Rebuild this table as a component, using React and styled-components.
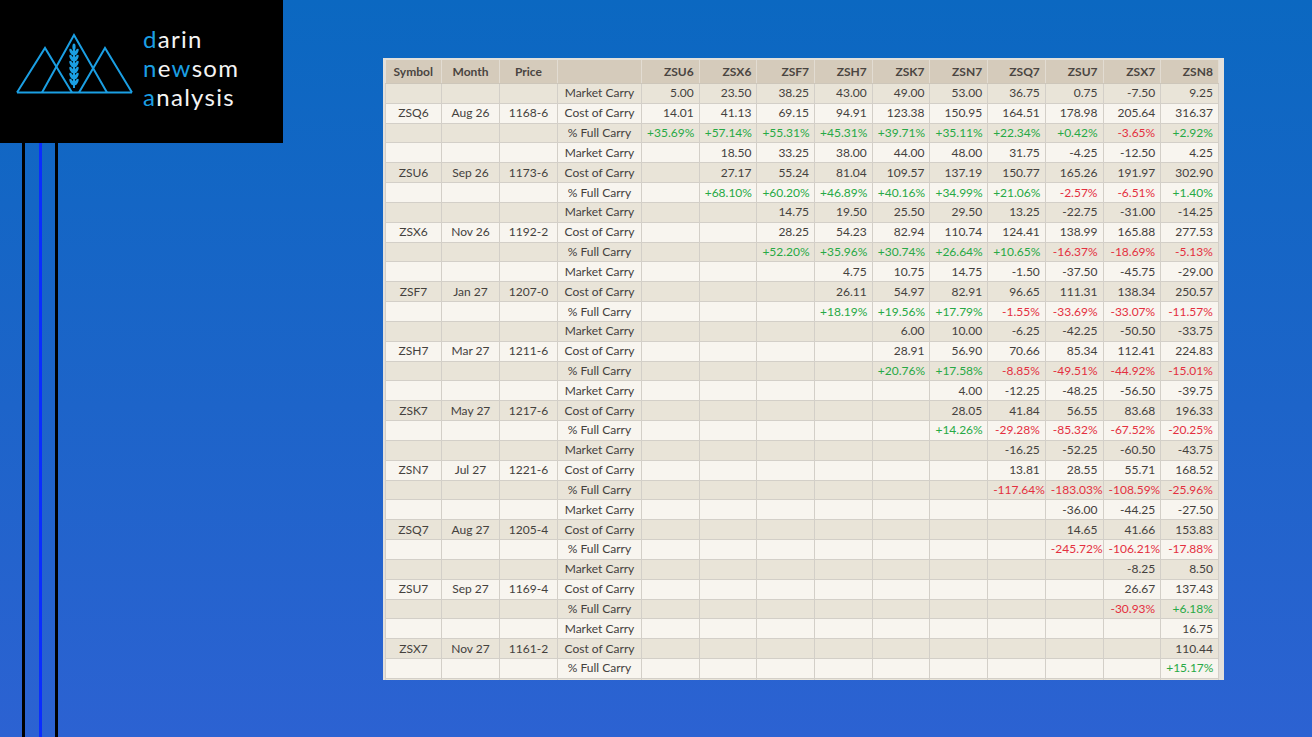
import React from 'react';
import styled, { createGlobalStyle } from 'styled-components';

const GlobalStyle = createGlobalStyle`
  html, body {
    margin: 0;
    padding: 0;
  }
  body {
    font-family: Lato, "Open Sans", Arial, sans-serif;
    background: linear-gradient(180deg, #0b68c1 0%, #1d64c9 55%, #2c62d2 100%);
    min-height: 100vh;
    overflow: hidden;
  }
`;

const Page = styled.div`
  display: grid;
  grid-template-columns: 283px 1fr;
  height: 737px;
`;

const Side = styled.div`
  display: flex;
  flex-direction: column;
  height: 100%;
`;

const LogoBox = styled.div`
  background: #000;
  height: 143px;
  display: flex;
  align-items: flex-start;
`;

const LogoText = styled.div`
  padding-top: 24px;
  margin-left: 2px;
  font-family: Lato, "Open Sans", sans-serif;
  font-weight: 400;
  font-size: 24px;
  line-height: 29px;
  color: #f4f4f4;
  letter-spacing: 1.3px;
`;

const Accent = styled.span`
  color: #1b9fe3;
`;

const Bars = styled.div`
  flex: 1;
  display: flex;
  padding-left: 22px;
`;

const Bar = styled.div`
  width: 3px;
  margin-right: ${p => p.gap}px;
  background: ${p => p.color};
`;

const Main = styled.div`
  padding: 58px 0 0 100px;
`;

const TableFrame = styled.div`
  width: 835px;
  height: 620px;
  overflow: hidden;
  background: #e3e0db;
  padding: 2px 4px 0 2px;
`;

const Grid = styled.table`
  width: 833px;
  table-layout: fixed;
  border-collapse: collapse;
  font-size: 12px;
  color: #44413d;
`;

const HeadCell = styled.th`
  height: 23px;
  padding: 0 5px;
  background: #d5cbbb;
  font-weight: 700;
  color: #4a4541;
  text-align: ${p => (p.right ? 'right' : 'center')};
  border-right: 1px solid #e2dcd2;
  border-bottom: 1px solid #cdc6ba;
  white-space: nowrap;
`;

const Row = styled.tr`
  height: 19.83px;
  background: ${p => (p.dark ? '#e9e4d8' : '#f8f5ef')};
`;

const Cell = styled.td`
  padding: 0 5px;
  border: 1px solid #d3cfc8;
  border-top: none;
  text-align: ${p => (p.right ? 'right' : 'center')};
  color: ${p => (p.tone === 'up' ? '#27a945' : p.tone === 'down' ? '#e4303f' : '#44413d')};
  white-space: nowrap;
  line-height: 18px;
`;

const contracts = ['ZSU6', 'ZSX6', 'ZSF7', 'ZSH7', 'ZSK7', 'ZSN7', 'ZSQ7', 'ZSU7', 'ZSX7', 'ZSN8'];

const blocks = [
  {
    sym: 'ZSQ6', month: 'Aug 26', price: '1168-6',
    mc: ['5.00', '23.50', '38.25', '43.00', '49.00', '53.00', '36.75', '0.75', '-7.50', '9.25'],
    cc: ['14.01', '41.13', '69.15', '94.91', '123.38', '150.95', '164.51', '178.98', '205.64', '316.37'],
    fc: ['+35.69%', '+57.14%', '+55.31%', '+45.31%', '+39.71%', '+35.11%', '+22.34%', '+0.42%', '-3.65%', '+2.92%'],
  },
  {
    sym: 'ZSU6', month: 'Sep 26', price: '1173-6',
    mc: ['18.50', '33.25', '38.00', '44.00', '48.00', '31.75', '-4.25', '-12.50', '4.25'],
    cc: ['27.17', '55.24', '81.04', '109.57', '137.19', '150.77', '165.26', '191.97', '302.90'],
    fc: ['+68.10%', '+60.20%', '+46.89%', '+40.16%', '+34.99%', '+21.06%', '-2.57%', '-6.51%', '+1.40%'],
  },
  {
    sym: 'ZSX6', month: 'Nov 26', price: '1192-2',
    mc: ['14.75', '19.50', '25.50', '29.50', '13.25', '-22.75', '-31.00', '-14.25'],
    cc: ['28.25', '54.23', '82.94', '110.74', '124.41', '138.99', '165.88', '277.53'],
    fc: ['+52.20%', '+35.96%', '+30.74%', '+26.64%', '+10.65%', '-16.37%', '-18.69%', '-5.13%'],
  },
  {
    sym: 'ZSF7', month: 'Jan 27', price: '1207-0',
    mc: ['4.75', '10.75', '14.75', '-1.50', '-37.50', '-45.75', '-29.00'],
    cc: ['26.11', '54.97', '82.91', '96.65', '111.31', '138.34', '250.57'],
    fc: ['+18.19%', '+19.56%', '+17.79%', '-1.55%', '-33.69%', '-33.07%', '-11.57%'],
  },
  {
    sym: 'ZSH7', month: 'Mar 27', price: '1211-6',
    mc: ['6.00', '10.00', '-6.25', '-42.25', '-50.50', '-33.75'],
    cc: ['28.91', '56.90', '70.66', '85.34', '112.41', '224.83'],
    fc: ['+20.76%', '+17.58%', '-8.85%', '-49.51%', '-44.92%', '-15.01%'],
  },
  {
    sym: 'ZSK7', month: 'May 27', price: '1217-6',
    mc: ['4.00', '-12.25', '-48.25', '-56.50', '-39.75'],
    cc: ['28.05', '41.84', '56.55', '83.68', '196.33'],
    fc: ['+14.26%', '-29.28%', '-85.32%', '-67.52%', '-20.25%'],
  },
  {
    sym: 'ZSN7', month: 'Jul 27', price: '1221-6',
    mc: ['-16.25', '-52.25', '-60.50', '-43.75'],
    cc: ['13.81', '28.55', '55.71', '168.52'],
    fc: ['-117.64%', '-183.03%', '-108.59%', '-25.96%'],
  },
  {
    sym: 'ZSQ7', month: 'Aug 27', price: '1205-4',
    mc: ['-36.00', '-44.25', '-27.50'],
    cc: ['14.65', '41.66', '153.83'],
    fc: ['-245.72%', '-106.21%', '-17.88%'],
  },
  {
    sym: 'ZSU7', month: 'Sep 27', price: '1169-4',
    mc: ['-8.25', '8.50'],
    cc: ['26.67', '137.43'],
    fc: ['-30.93%', '+6.18%'],
  },
  {
    sym: 'ZSX7', month: 'Nov 27', price: '1161-2',
    mc: ['16.75'],
    cc: ['110.44'],
    fc: ['+15.17%'],
  },
];

// pad each series on the left so values sit under the right contract
const padded = (vals) => [...Array(contracts.length - vals.length).fill(''), ...vals];

const toneOf = (v, pct) => {
  if (!pct || !v) return undefined;
  return v.startsWith('-') ? 'down' : 'up';
};

const Logo = () => (
  <svg width="141" height="143" viewBox="0 0 141 143">
    <g fill="none" stroke="#1b9fe3" strokeWidth="2" strokeLinejoin="miter">
      <polyline points="17,92.5 45,48 72,92.5" />
      <polyline points="42,92.5 74,35 107,92.5" />
      <polyline points="79,92.5 105,48 132,92.5" />
      <line x1="17" y1="92.5" x2="132" y2="92.5" />
      <line x1="74" y1="46" x2="74" y2="88" />
    </g>
    <g fill="#1b9fe3">
      <ellipse cx="74" cy="47" rx="1.6" ry="3.4" />
      {[52, 58, 64, 70, 76, 82].map((y) => (
        <g key={y}>
          <ellipse cx="71.6" cy={y} rx="1.6" ry="3.6" transform={`rotate(-28 71.6 ${y})`} />
          <ellipse cx="76.4" cy={y} rx="1.6" ry="3.6" transform={`rotate(28 76.4 ${y})`} />
        </g>
      ))}
    </g>
  </svg>
);

export default function App() {
  let rowIndex = 0;
  return (
    <>
      <GlobalStyle />
      <Page>
        <Side>
          <LogoBox>
            <Logo />
            <LogoText>
              <div><Accent>d</Accent>arin</div>
              <div><Accent>n</Accent>e<Accent>w</Accent>som</div>
              <div><Accent>a</Accent>nalysis</div>
            </LogoText>
          </LogoBox>
          <Bars>
            <Bar color="#000" gap={14} />
            <Bar color="#0a2cff" gap={13} />
            <Bar color="#000" gap={0} />
          </Bars>
        </Side>
        <Main>
          <TableFrame>
            <Grid>
              <colgroup>
                <col style={{ width: 56 }} />
                <col style={{ width: 58 }} />
                <col style={{ width: 58 }} />
                <col style={{ width: 84 }} />
                {contracts.map((c) => (
                  <col key={c} style={{ width: 57.7 }} />
                ))}
              </colgroup>
              <thead>
                <tr>
                  <HeadCell>Symbol</HeadCell>
                  <HeadCell>Month</HeadCell>
                  <HeadCell>Price</HeadCell>
                  <HeadCell />
                  {contracts.map((c) => (
                    <HeadCell key={c} right>{c}</HeadCell>
                  ))}
                </tr>
              </thead>
              <tbody>
                {blocks.map((b) =>
                  [
                    { label: 'Market Carry', vals: b.mc },
                    { label: 'Cost of Carry', vals: b.cc, head: true },
                    { label: '% Full Carry', vals: b.fc, pct: true },
                  ].map((r) => {
                    const dark = rowIndex++ % 2 === 0;
                    return (
                      <Row key={b.sym + r.label} dark={dark}>
                        <Cell>{r.head ? b.sym : ''}</Cell>
                        <Cell>{r.head ? b.month : ''}</Cell>
                        <Cell>{r.head ? b.price : ''}</Cell>
                        <Cell>{r.label}</Cell>
                        {padded(r.vals).map((v, i) => (
                          <Cell key={i} right tone={toneOf(v, r.pct)}>{v}</Cell>
                        ))}
                      </Row>
                    );
                  })
                )}
                <Row dark>
                  {Array.from({ length: 14 }).map((_, i) => (
                    <Cell key={i} />
                  ))}
                </Row>
              </tbody>
            </Grid>
          </TableFrame>
        </Main>
      </Page>
    </>
  );
}
